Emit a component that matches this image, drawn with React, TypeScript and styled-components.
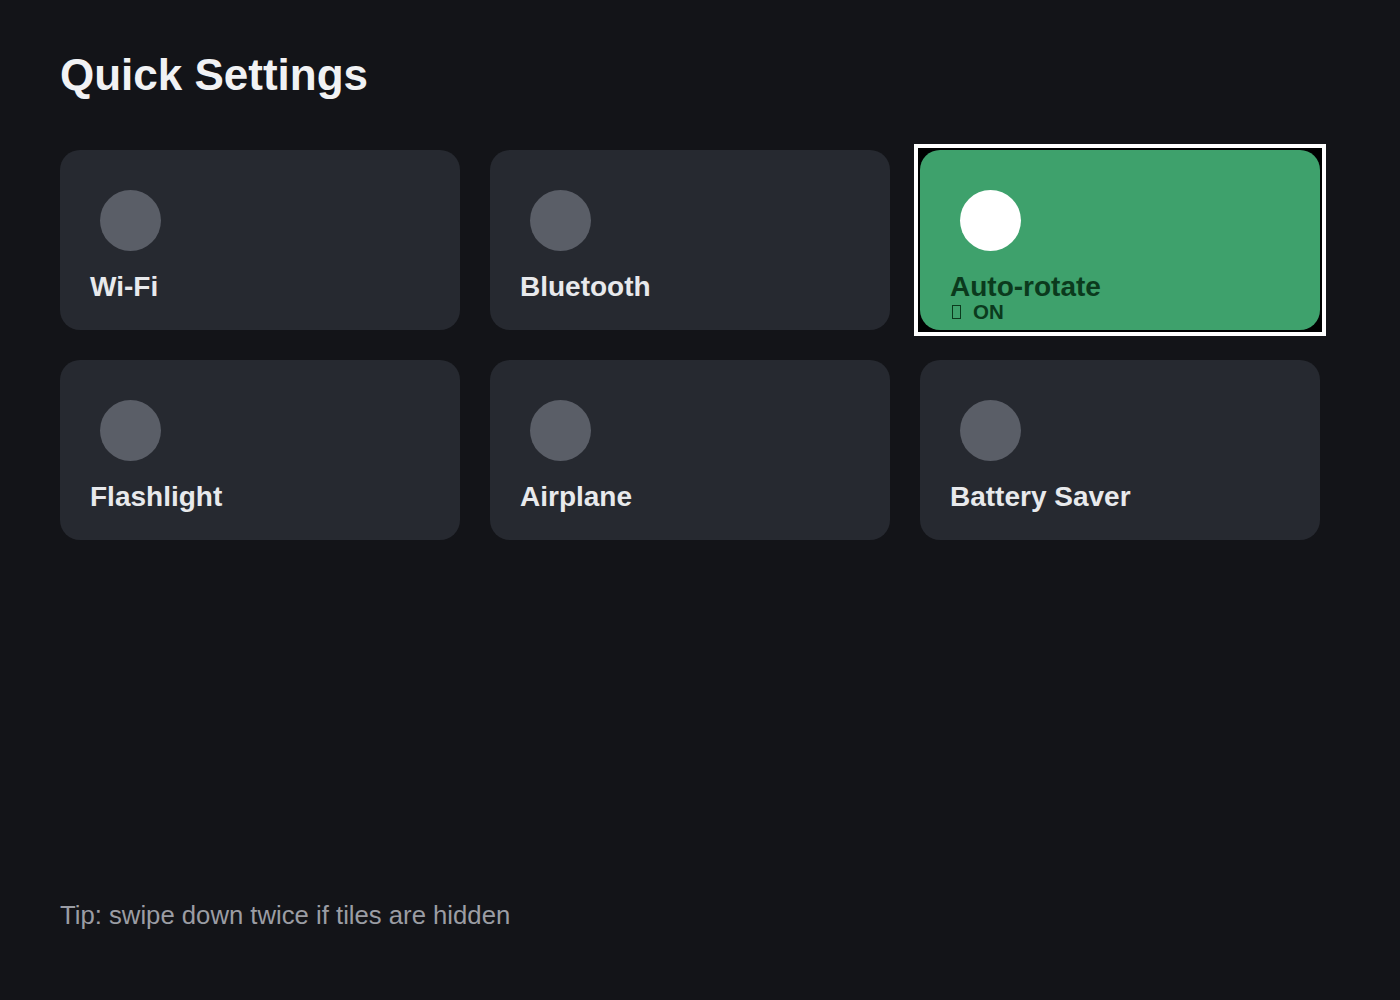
import styled, { createGlobalStyle } from 'styled-components';

const GlobalStyle = createGlobalStyle`
html {
    background: #131418;
}
body {
    margin: 0;
    padding: 0;
    font-family: "Liberation Sans", Arial, sans-serif;
}
`;

const StyledPage = styled.div`
box-sizing: border-box;
min-height: 1000px;
padding: 50px 60px 70px;
display: flex;
flex-direction: column;
`;

const StyledTitle = styled.h1`
margin: 0;
font-size: 44px;
font-weight: 700;
color: #f1f2f4;
`;

const StyledGrid = styled.div`
margin-top: 50px;
max-width: 1260px;
display: grid;
grid-template-columns: repeat(3, 1fr);
gap: 30px;
`;

const StyledTile = styled.div<{ active: boolean }>`
position: relative;
box-sizing: border-box;
height: 180px;
padding: 30px;
border-radius: 20px;
background: ${props => props.active ? "#3ea16c" : "#262930"};
color: ${props => props.active ? "#0b3a1d" : "#e8e9ec"};

${props => props.active && `
&::before {
    content: "";
    position: absolute;
    inset: -6px;
    border: 4px solid #ffffff;
    background: #000000;
    z-index: -1;
}
`}
`;

const StyledIconWrap = styled.div`
width: 80px;
height: 80px;
display: flex;
align-items: center;
justify-content: center;
`;

const StyledCircle = styled.div<{ active: boolean }>`
width: 61px;
height: 61px;
border-radius: 50%;
background: ${props => props.active ? "#ffffff" : "#5a5e67"};
`;

const StyledLabel = styled.div`
margin-top: 11px;
font-size: 28px;
font-weight: 700;
`;

const StyledStatus = styled.div`
margin-top: -3px;
font-size: 20.5px;
font-weight: 700;
`;

const StyledGlyphBox = styled.span`
display: inline-block;
box-sizing: border-box;
width: 9px;
height: 14px;
border: 1px solid currentColor;
margin: 0 12px 0 2px;
`;

const StyledTip = styled.p`
margin: auto 0 0;
font-size: 25.7px;
color: #9b9da4;
`;

const tiles = [
    { name: "Wi-Fi", on: false },
    { name: "Bluetooth", on: false },
    { name: "Auto-rotate", on: true },
    { name: "Flashlight", on: false },
    { name: "Airplane", on: false },
    { name: "Battery Saver", on: false },
];

const App = () => {
    return (
        <>
            <GlobalStyle />
            <StyledPage>
                <StyledTitle>Quick Settings</StyledTitle>
                <StyledGrid>
                    {tiles.map(tile => (
                        <StyledTile key={tile.name} active={tile.on}>
                            <StyledIconWrap>
                                <StyledCircle active={tile.on} />
                            </StyledIconWrap>
                            <StyledLabel>{tile.name}</StyledLabel>
                            {tile.on && <StyledStatus><StyledGlyphBox />ON</StyledStatus>}
                        </StyledTile>
                    ))}
                </StyledGrid>
                <StyledTip>Tip: swipe down twice if tiles are hidden</StyledTip>
            </StyledPage>
        </>
    );
}

export default App;
